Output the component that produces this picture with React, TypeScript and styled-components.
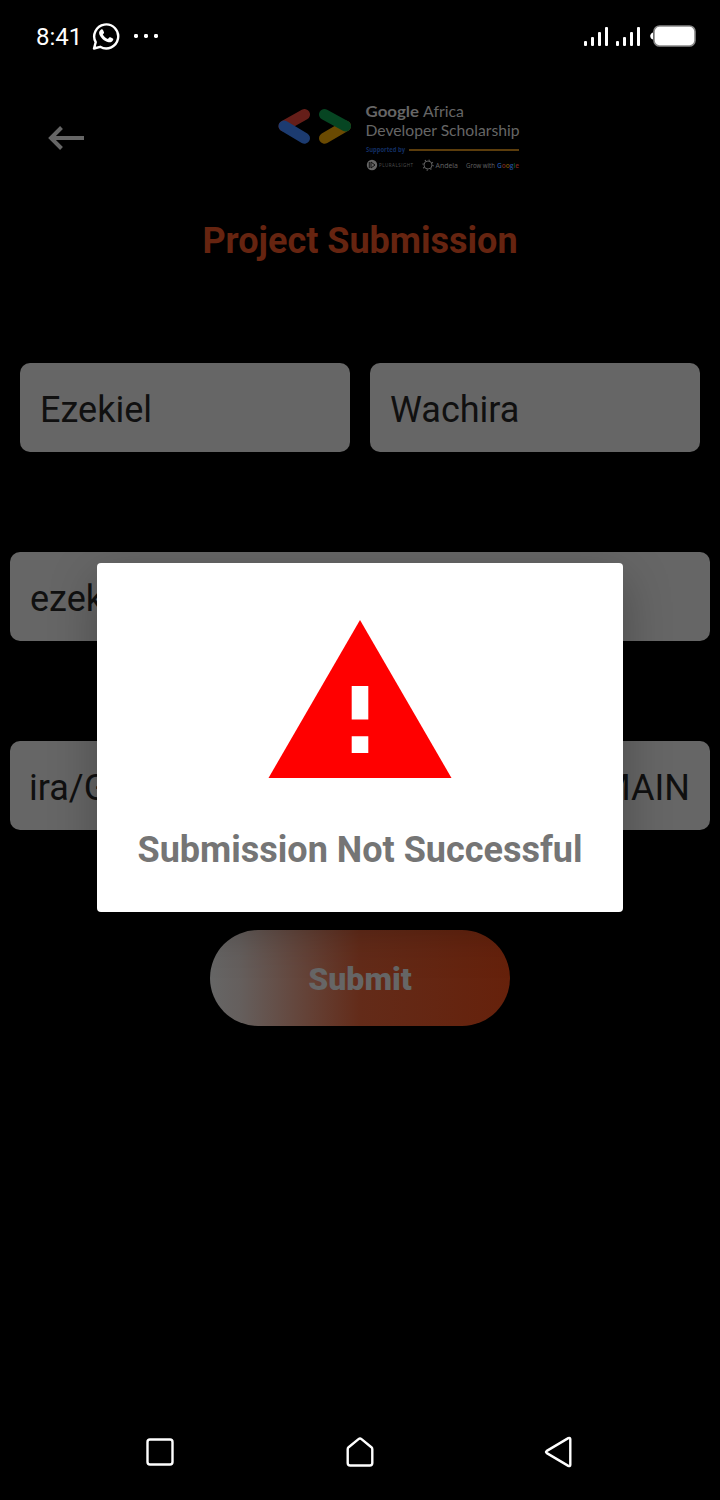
import React from "react";
import styled, { createGlobalStyle } from "styled-components";

const GlobalStyle = createGlobalStyle`
  body { margin: 0; background: #000; font-family: Roboto, "Liberation Sans", sans-serif; }
  *, *::before, *::after { box-sizing: border-box; }
`;

const Screen = styled.div`
  position: relative;
  width: 720px;
  height: 1500px;
  background: #000;
  overflow: hidden;
  display: flex;
  flex-direction: column;
`;

const StatusBar = styled.header`
  height: 72px;
  padding: 0 24px 0 36px;
  display: flex;
  align-items: center;
  justify-content: space-between;
  color: #fff;
`;

const StatusGroup = styled.div`
  display: flex;
  align-items: center;
`;

const StatusIcon = styled.span<{ $before: number }>`
  display: flex;
  margin-left: ${(p) => p.$before}px;
`;

const Clock = styled.span`
  font-size: 24px;
  line-height: 28px;
  width: 46px;
  margin-top: 2px;
  white-space: nowrap;
`;

const AppBar = styled.div`
  height: 132px;
  padding: 28px 48px 0;
  display: flex;
  align-items: flex-start;
`;

const BackButton = styled.button`
  border: 0;
  padding: 0;
  margin: 24px 193px 0 0;
  width: 36px;
  height: 28px;
  background: none;
  svg { display: block; }
`;

const LogoArt = styled.svg`
  display: block;
  overflow: visible;
`;

const Title = styled.h1`
  margin: 15px 0 0;
  height: 44px;
  font-size: 36px;
  line-height: 44px;
  font-weight: 700;
  text-align: center;
  color: #662410;
`;

const Form = styled.form`
  margin-top: 100px;
  padding: 0 10px;
  display: flex;
  flex-direction: column;
  gap: 100px;
`;

const NameRow = styled.div`
  display: grid;
  grid-template-columns: 1fr 1fr;
  gap: 20px;
  padding: 0 10px;
`;

const Field = styled.div<{ $inset?: number }>`
  height: 89px;
  padding: 4px 20px 0 ${(p) => p.$inset ?? 20}px;
  border-radius: 10px;
  background: #666;
  color: #101010;
  font-size: 36px;
  display: flex;
  align-items: center;
  justify-content: space-between;
  white-space: nowrap;
`;

const SubmitButton = styled.button`
  align-self: center;
  width: 300px;
  height: 96px;
  padding: 1px 0 0;
  border: 0;
  border-radius: 48px;
  background: linear-gradient(90deg, #666 0%, #655f5d 10%, #632b19 50%, #66210b 100%);
  color: #666;
  font: 900 32px/40px Roboto, sans-serif;
`;

const Overlay = styled.div`
  position: absolute;
  inset: 0 0 25px;
  display: flex;
  align-items: center;
  justify-content: center;
`;

const Dialog = styled.div`
  width: 526px;
  height: 349px;
  padding-top: 57px;
  border-radius: 4px;
  background: #fff;
  box-shadow: 0 16px 48px rgba(0, 0, 0, 0.28);
  display: flex;
  flex-direction: column;
  align-items: center;
`;

const Message = styled.p`
  margin: 50px 0 0;
  font-size: 36px;
  line-height: 44px;
  font-weight: 700;
  color: #757575;
  white-space: nowrap;
`;

const NavBar = styled.nav`
  margin-top: auto;
  height: 96px;
  padding: 0 140px;
  display: flex;
  align-items: center;
  justify-content: space-between;
  svg { display: block; }
`;

const WhatsApp = () => (
  <svg width="28" height="28" viewBox="0 0 28 28" fill="none">
    <path d="M2 26.5 3.7 20.2A12 12 0 1 1 8.2 24.8Z" stroke="#fff" strokeWidth="2.4" strokeLinejoin="round" />
    <path d="M9.1 7.4c.7-.4 1.4-.3 1.8.4l1.1 2.5c.2.6 0 .9-1.2 2.2 1.3 2.3 2.8 3.7 5.1 4.6l1.3-1.6c.4-.4.8-.5 1.3-.2l2.3 1.1c.6.3.6.8.3 1.6-.7 1.8-2.6 2.6-4.5 2.2C12 19.1 8.6 15.7 7.3 12.2c-.6-2 .2-3.8 1.8-4.8Z" fill="#fff" />
  </svg>
);

const Dots = () => (
  <svg width="26" height="4" viewBox="0 0 26 4" fill="#fff">
    <rect width="4" height="4" rx="1.4" />
    <rect x="10" width="4" height="4" rx="1.4" />
    <rect x="20" width="4" height="4" rx="1.4" />
  </svg>
);

const Signal = () => (
  <svg width="24" height="20" viewBox="0 0 24 20" fill="#fff">
    <rect y="15" width="3" height="5" rx="1" />
    <rect x="7" y="11" width="3" height="9" rx="1" />
    <rect x="14" y="6" width="3" height="14" rx="1" />
    <rect x="21" y="1" width="3" height="19" rx="1" />
  </svg>
);

const Battery = () => (
  <svg width="46" height="22" viewBox="0 0 46 22">
    <path d="M3 7.5C-.7 8.5-.7 13.5 3 14.5Z" fill="#fff" />
    <rect x="4" y="1" width="41" height="20" rx="5.5" fill="#fff" stroke="#888" strokeWidth="1.6" />
  </svg>
);

const Logo = () => (
  <LogoArt width="250" height="80" viewBox="0 0 250 80" fontFamily='"Open Sans", Lato, sans-serif' fill="#666">
    <g strokeWidth="11" strokeLinecap="round">
      <path d="M27.5 14.5 7 26" stroke="#651e19" />
      <path d="M7 26 27.5 38.2" stroke="#1c3b70" />
      <path d="M47.5 38.2 68.5 26" stroke="#6a4a02" />
      <path d="M47.5 14.5 68.5 26" stroke="#064522" />
    </g>
    <g fontFamily="Lato, sans-serif" fontSize="16">
      <text x="88.5" y="16.5" fontWeight="700" textLength="53.5" lengthAdjust="spacingAndGlyphs">Google</text>
      <text x="146" y="16.5" textLength="41" lengthAdjust="spacingAndGlyphs">Africa</text>
      <text x="88.5" y="35.6" textLength="154" lengthAdjust="spacingAndGlyphs">Developer Scholarship</text>
    </g>
    <text x="89" y="51.8" fontSize="6.3" fontWeight="700" fill="#122e62" textLength="39" lengthAdjust="spacingAndGlyphs">Supported by</text>
    <path d="M132 50H242" stroke="#5c3d0c" strokeWidth="2" />
    <circle cx="95" cy="65" r="5.2" />
    <path d="M92.3 62v6M94 62l4 3-4 3Z" fill="none" stroke="#111" strokeWidth="1" />
    <text x="102" y="66.7" fontSize="4.5" textLength="34" fill="#505050">PLURALSIGHT</text>
    <circle cx="151" cy="65" r="4" fill="none" stroke="#5c5c5c" />
    <circle cx="151" cy="65" r="5" fill="none" stroke="#5c5c5c" strokeWidth="1.3" strokeDasharray="1.3 2.627" />
    <text x="158.5" y="67.8" fontSize="7.6" textLength="22.5" lengthAdjust="spacingAndGlyphs">Andela</text>
    <text x="189" y="67.6" fontSize="7" textLength="29" lengthAdjust="spacingAndGlyphs">Grow with</text>
    <text x="220" y="67.6" fontSize="7.2" fontWeight="600" textLength="22" lengthAdjust="spacingAndGlyphs"><tspan fill="#20509c">G</tspan><tspan fill="#7a2820">o</tspan><tspan fill="#7a5504">o</tspan><tspan fill="#20509c">g</tspan><tspan fill="#07552a">l</tspan><tspan fill="#7a2820">e</tspan></text>
  </LogoArt>
);

export default function App() {
  return (
    <>
      <GlobalStyle />
      <Screen>
        <StatusBar>
          <StatusGroup>
            <Clock>8:41</Clock>
            <StatusIcon $before={10}><WhatsApp /></StatusIcon>
            <StatusIcon $before={14}><Dots /></StatusIcon>
          </StatusGroup>
          <StatusGroup>
            <StatusIcon $before={0}><Signal /></StatusIcon>
            <StatusIcon $before={8}><Signal /></StatusIcon>
            <StatusIcon $before={10}><Battery /></StatusIcon>
          </StatusGroup>
        </StatusBar>
        <AppBar>
          <BackButton type="button" aria-label="Back">
            <svg width="36" height="28" viewBox="0 0 36 28" fill="none" stroke="#666" strokeWidth="4">
              <path d="M36 14H3.5M13.5 3.5 3 14 13.5 24.5" />
            </svg>
          </BackButton>
          <Logo />
        </AppBar>
        <Title>Project Submission</Title>
        <Form>
          <NameRow>
            <Field>Ezekiel</Field>
            <Field>Wachira</Field>
          </NameRow>
          <Field>ezekiel</Field>
          <Field $inset={19}><span>ira/G</span><span>MAIN</span></Field>
          <SubmitButton type="button">Submit</SubmitButton>
        </Form>
        <NavBar>
          <svg width="40" height="40" viewBox="0 0 40 40" fill="none" stroke="#fff" strokeWidth="2.4">
            <rect x="7.5" y="7.5" width="25" height="25" rx="2.5" />
          </svg>
          <svg width="40" height="40" viewBox="0 0 40 40" fill="none" stroke="#fff" strokeWidth="2.4" strokeLinejoin="round">
            <path d="M7.7 17.2Q7.7 16 8.6 15.2L18.5 7.1Q20 6 21.5 7.1L31.4 15.2Q32.3 16 32.3 17.2V31Q32.3 33.5 29.8 33.5H10.2Q7.7 33.5 7.7 31Z" />
          </svg>
          <svg width="40" height="40" viewBox="0 0 40 40" fill="none" stroke="#fff" strokeWidth="2.4" strokeLinejoin="round">
            <path d="M6.8 18.9 28.3 6.1Q30.3 5.3 30.3 7.3V32.7Q30.3 34.7 28.3 33.9L6.8 21.1Q5.2 20 6.8 18.9Z" />
          </svg>
        </NavBar>
        <Overlay>
          <Dialog role="alertdialog">
            <svg width="184" height="158" viewBox="0 0 184 158">
              <path d="M92 0 183.5 158H.5Z" fill="#f00" />
              <path d="M83.7 66h16.6v33.5H83.7ZM83.7 116.3h16.6V133H83.7Z" fill="#fff" />
            </svg>
            <Message>Submission Not Successful</Message>
          </Dialog>
        </Overlay>
      </Screen>
    </>
  );
}
